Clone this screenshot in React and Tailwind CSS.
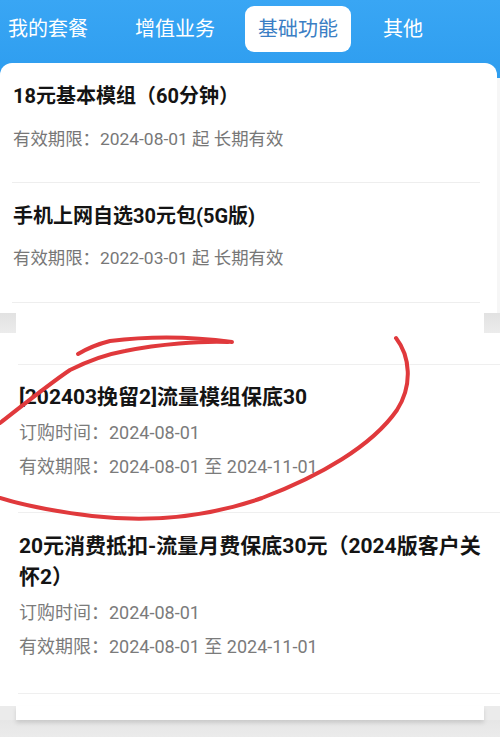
import React from "react";

const font = "font-['Roboto','Noto_Sans_CJK_SC',sans-serif]";

function TopItem({ title, sub, last }) {
  return (
    <div className="ml-[12px] mr-[17px] border-b border-[#eeeeee] pl-[1px]">
      <div className={"pt-[20px] text-[20px] leading-[26px] font-bold text-[#141414]"}>{title}</div>
      <div className={(last ? "mt-[17px] pb-[32px]" : "mt-[18px] pb-[31px]") + " text-[17.4px] leading-[24px] text-[#777777]"}>{sub}</div>
    </div>
  );
}

function BottomItem({ title, order, valid, first }) {
  return (
    <div className="ml-[18px] border-b border-[#efefef] pl-[1px] pr-[10px]">
      <div className={(first ? "pt-[17px]" : "pt-[18px]") + " text-[21px] leading-[31px] font-bold text-[#141414]"}>{title}</div>
      <div className="mt-[8px] text-[18px] leading-[24px] text-[#7b7b7b]">{order}</div>
      <div className={(first ? "pb-[33px]" : "pb-[34px]") + " mt-[10px] text-[18px] leading-[24px] text-[#7b7b7b]"}>{valid}</div>
    </div>
  );
}

export default function App() {
  return (
    <div className={"relative w-[500px] h-[737px] overflow-hidden bg-white " + font}>
      {/* Top screen */}
      <div className="bg-[linear-gradient(to_bottom,#39a6f4_0px,#2e9def_78px,#f6f6f6_78px)]">
        <div className="h-[63px] pt-[6px] flex items-start text-[20px] text-white">
          <div className="h-[46px] flex items-center px-[13px] ml-[-5px]">我的套餐</div>
          <div className="h-[46px] flex items-center px-[13px] ml-[21px]">增值业务</div>
          <div className="h-[46px] flex items-center px-[13px] ml-[17px] bg-white rounded-[9px] text-[#3a7ec4]">基础功能</div>
          <div className="h-[46px] flex items-center px-[13px] ml-[19px]">其他</div>
        </div>
        <div className="h-[250px] mr-[3px] bg-white rounded-t-[12px]">
          <TopItem title="18元基本模组（60分钟）" sub="有效期限：2024-08-01 起 长期有效" />
          <TopItem title="手机上网自选30元包(5G版)" sub="有效期限：2022-03-01 起 长期有效" last />
        </div>
      </div>
      <div className="h-[20px] flex">
        <div className="w-[16px] bg-[linear-gradient(to_bottom,#e2e2e2,#ececec)]"></div>
        <div className="flex-1 bg-white"></div>
        <div className="w-[16px] bg-[linear-gradient(to_bottom,#e2e2e2,#ececec)]"></div>
      </div>

      {/* Bottom screen */}
      <div className="bg-white">
        <div className="h-[32px] ml-[18px] border-b border-[#efefef]"></div>
        <BottomItem
          first
          title="[202403挽留2]流量模组保底30"
          order="订购时间：2024-08-01"
          valid="有效期限：2024-08-01 至 2024-11-01"
        />
        <BottomItem
          title="20元消费抵扣-流量月费保底30元（2024版客户关怀2）"
          order="订购时间：2024-08-01"
          valid="有效期限：2024-08-01 至 2024-11-01"
        />
        <div className="h-[12px]"></div>
      </div>
      <div className="h-[14px] flex">
        <div className="w-[16px] bg-[#ebebeb]"></div>
        <div className="flex-1 bg-white shadow-[0_3px_4px_rgba(0,0,0,0.12)] relative z-10"></div>
        <div className="w-[16px] bg-[#ebebeb]"></div>
      </div>
      <div className="h-[40px] bg-[linear-gradient(to_bottom,#e6e6e6,#f2f2f2)]"></div>

      {/* Red hand-drawn circle */}
      <svg className="absolute left-0 top-0 pointer-events-none" width="500" height="737" viewBox="0 0 500 737">
        <g fill="none" stroke="#e0393c" strokeWidth="4" strokeLinecap="round">
          <path d="M78,354 C88,348 98,344 110,341 C150,336 195,337 232,342" />
          <path d="M0,423 C28,401 52,382 70,370 C90,360 108,354 125,351 C160,344 200,341 228,342" />
          <path d="M396,338 C410,356 413,385 397,410 C372,446 320,476 262,498 C205,518 145,522 92,516 C52,511 22,505 0,498" />
        </g>
      </svg>
    </div>
  );
}
